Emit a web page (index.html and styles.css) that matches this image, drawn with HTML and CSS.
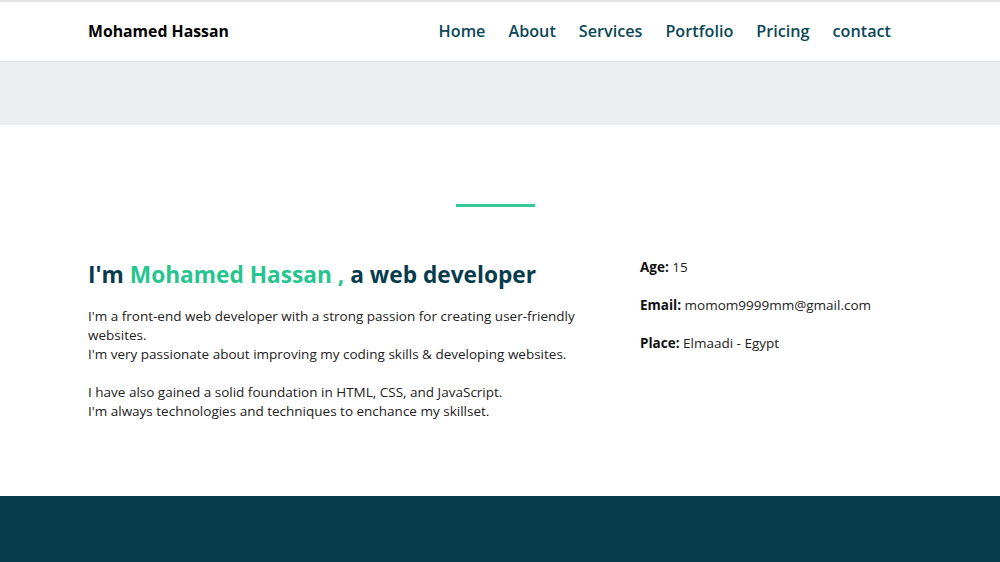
FILE: index.html
```html
<!DOCTYPE html>
<html lang="en">
<head>
<meta charset="utf-8">
<title>Mohamed Hassan</title>
<link rel="stylesheet" href="styles.css">
</head>
<body>
<header class="site-header">
  <div class="container header-inner">
    <a class="brand" href="#">Mohamed Hassan</a>
    <nav class="nav">
      <a href="#">Home</a>
      <a href="#">About</a>
      <a href="#">Services</a>
      <a href="#">Portfolio</a>
      <a href="#">Pricing</a>
      <a href="#">contact</a>
    </nav>
  </div>
</header>
<div class="hero-band"></div>
<section class="about">
  <div class="divider"></div>
  <div class="container about-grid">
    <div class="about-text">
      <h2 class="about-title">I'm <span class="accent">Mohamed Hassan ,</span> a web developer</h2>
      <p>I'm a front-end web developer with a strong passion for creating user-friendly websites.<br>I'm very passionate about improving my coding skills &amp; developing websites.</p>
      <p>I have also gained a solid foundation in HTML, CSS, and JavaScript.<br>I'm always technologies and techniques to enchance my skillset.</p>
    </div>
    <ul class="info">
      <li><b>Age:</b> 15</li>
      <li><b>Email:</b> momom9999mm@gmail.com</li>
      <li><b>Place:</b> Elmaadi - Egypt</li>
    </ul>
  </div>
</section>
<footer class="dark-band"></footer>
</body>
</html>
```

FILE: styles.css
```css
* { box-sizing: border-box; }
html, body { margin: 0; padding: 0; }
body {
  font-family: "Open Sans", "Liberation Sans", sans-serif;
  color: #1c1c1c;
  background: #fff;
  border-top: 2px solid #e4e4e4;
}
.container {
  padding: 0 109px 0 88px;
}
.site-header {
  background: #fff;
  border-bottom: 1px solid #dedede;
}
.header-inner {
  height: 59px;
  display: flex;
  align-items: center;
  justify-content: space-between;
  padding-bottom: 1px;
}
.brand {
  font-size: 15.8px;
  font-weight: 700;
  color: #000;
  text-decoration: none;
}
.nav {
  display: flex;
  gap: 23px;
}
.nav a {
  font-size: 16.2px;
  font-weight: 600;
  color: #0b4757;
  text-decoration: none;
}
.hero-band {
  height: 63px;
  background: #eceff2;
}
.about {
  padding: 79px 0 0;
  height: 371px;
}
.divider {
  width: 79px;
  height: 3px;
  background: #35cb98;
  margin: 0 0 51px calc(50% - 44px);
}
.about-grid {
  display: grid;
  grid-template-columns: 502px 1fr;
  gap: 50px;
}
.about-title {
  margin: 0 0 17px;
  padding-top: 2px;
  font-size: 22.7px;
  font-weight: 700;
  color: #073c4c;
  line-height: 30px;
}
.accent { color: #26c48e; }
.about-text p {
  margin: 0 0 19px;
  font-size: 13.5px;
  line-height: 19px;
  color: #222;
}
.info {
  list-style: none;
  margin: 0;
  padding: 0;
}
.info li {
  font-size: 13.5px;
  line-height: 19px;
  margin-bottom: 19px;
  color: #222;
}
.info b { color: #111; }
.dark-band {
  height: 66px;
  background: #053b4b;
}
```
